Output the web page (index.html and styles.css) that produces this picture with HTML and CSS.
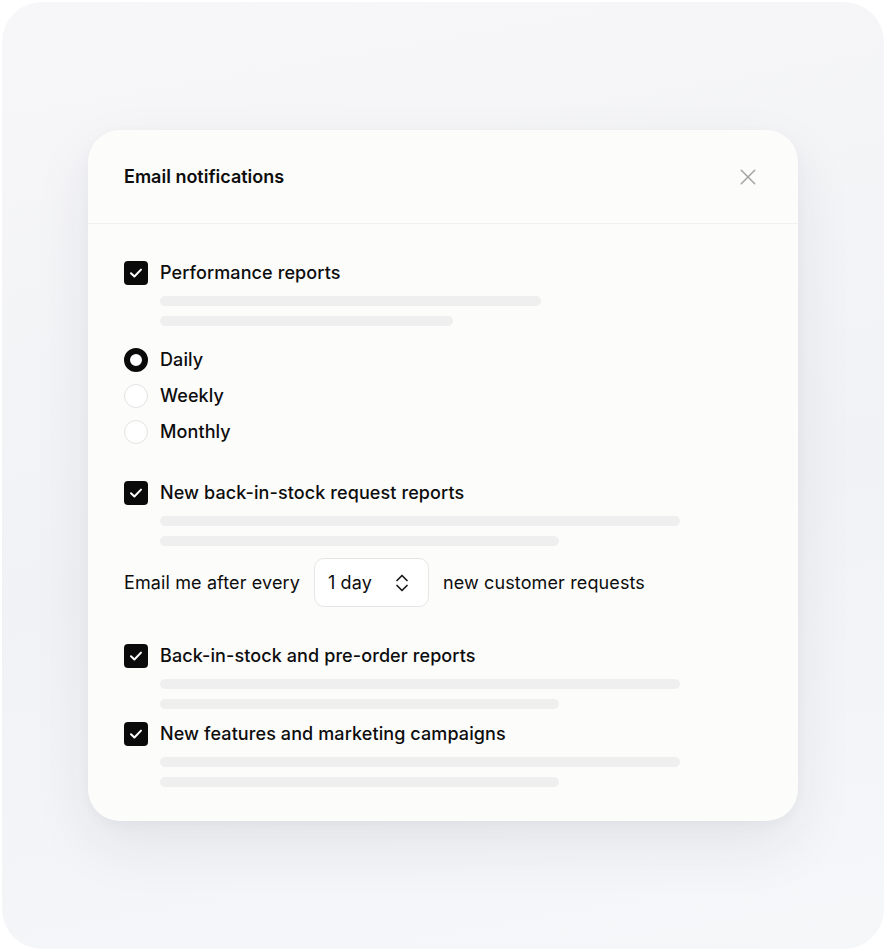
FILE: index.html
```html
<!DOCTYPE html>
<html lang="en">
<head>
    <meta charset="UTF-8">
    <meta name="viewport" content="width=device-width, initial-scale=1.0">
    <title>Email notifications</title>
    <link rel="stylesheet" href="styles.css">
</head>
<body>
    <div class="frame">
        <div class="card">
            <div class="card-header">
                <h1>Email notifications</h1>
                <button class="close" type="button" aria-label="Close">
                    <svg width="20" height="20" viewBox="0 0 20 20" fill="none" stroke="currentColor" stroke-width="1.5" stroke-linecap="round">
                        <path d="M3.3 3.3 L16.7 16.7 M16.7 3.3 L3.3 16.7"/>
                    </svg>
                </button>
            </div>

            <div class="card-body">
                <div class="option">
                    <label class="check-row">
                        <span class="checkbox">
                            <svg width="24" height="24" viewBox="0 0 24 24" fill="none" stroke="#fff" stroke-width="2" stroke-linecap="round" stroke-linejoin="round"><path d="M7 12.2 L10.4 15.5 L17 8.6"/></svg>
                        </span>
                        Performance reports
                    </label>
                    <div class="lines">
                        <span class="line" style="width: 381px"></span>
                        <span class="line" style="width: 293px"></span>
                    </div>
                </div>

                <div class="radios">
                    <label class="radio-row"><span class="radio selected"></span>Daily</label>
                    <label class="radio-row"><span class="radio"></span>Weekly</label>
                    <label class="radio-row"><span class="radio"></span>Monthly</label>
                </div>

                <div class="option spaced">
                    <label class="check-row">
                        <span class="checkbox">
                            <svg width="24" height="24" viewBox="0 0 24 24" fill="none" stroke="#fff" stroke-width="2" stroke-linecap="round" stroke-linejoin="round"><path d="M7 12.2 L10.4 15.5 L17 8.6"/></svg>
                        </span>
                        New back-in-stock request reports
                    </label>
                    <div class="lines">
                        <span class="line" style="width: 520px"></span>
                        <span class="line" style="width: 399px"></span>
                    </div>
                </div>

                <div class="every">
                    <span>Email me after every</span>
                    <div class="select">
                        <span>1 day</span>
                        <svg width="24" height="24" viewBox="0 0 24 24" fill="none" stroke="currentColor" stroke-width="1.7" stroke-linecap="round" stroke-linejoin="round"><path d="M7 9.5 L12 4.5 L17 9.5 M7 14.5 L12 19.5 L17 14.5"/></svg>
                    </div>
                    <span>new customer requests</span>
                </div>

                <div class="option spaced">
                    <label class="check-row">
                        <span class="checkbox">
                            <svg width="24" height="24" viewBox="0 0 24 24" fill="none" stroke="#fff" stroke-width="2" stroke-linecap="round" stroke-linejoin="round"><path d="M7 12.2 L10.4 15.5 L17 8.6"/></svg>
                        </span>
                        Back-in-stock and pre-order reports
                    </label>
                    <div class="lines">
                        <span class="line" style="width: 520px"></span>
                        <span class="line" style="width: 399px"></span>
                    </div>
                </div>

                <div class="option">
                    <label class="check-row">
                        <span class="checkbox">
                            <svg width="24" height="24" viewBox="0 0 24 24" fill="none" stroke="#fff" stroke-width="2" stroke-linecap="round" stroke-linejoin="round"><path d="M7 12.2 L10.4 15.5 L17 8.6"/></svg>
                        </span>
                        New features and marketing campaigns
                    </label>
                    <div class="lines">
                        <span class="line" style="width: 520px"></span>
                        <span class="line" style="width: 399px"></span>
                    </div>
                </div>
            </div>
        </div>
    </div>
</body>
</html>
```

FILE: styles.css
```css
* {
    box-sizing: border-box;
}

body {
    font-family: 'Inter', 'Noto Sans', sans-serif;
    background-color: #fff;
    margin: 0;
    padding: 2px;
    color: #0d0d0d;
}

.frame {
    height: 947px;
    border-radius: 40px;
    background: linear-gradient(170deg, #f7f7f9 0%, #f1f2f5 55%, #f6f7f9 100%);
    padding: 128px 0 0 86px;
}

.card {
    width: 710px;
    background-color: #fcfcfb;
    border-radius: 32px;
    box-shadow: 0 24px 60px rgba(30, 35, 60, 0.08), 0 4px 14px rgba(30, 35, 60, 0.03);
}

.card-header {
    height: 94px;
    display: flex;
    align-items: center;
    justify-content: space-between;
    padding: 0 36px;
    border-bottom: 1px solid #f1f1f3;
}

h1 {
    margin: 0;
    font-size: 18px;
    font-weight: 600;
}

.close {
    border: none;
    background: none;
    padding: 0;
    margin-right: 4px;
    color: #a3a3a3;
    display: flex;
    cursor: pointer;
}

.card-body {
    padding: 37px 36px 34px;
}

.check-row,
.radio-row {
    display: flex;
    align-items: center;
    gap: 12px;
    font-size: 18px;
    font-weight: 500;
    line-height: 24px;
    letter-spacing: 0.1px;
}

.checkbox {
    width: 24px;
    height: 24px;
    border-radius: 4px;
    background-color: #0a0a0a;
    display: flex;
}

.lines {
    display: flex;
    flex-direction: column;
    gap: 10px;
    padding: 11px 0 0 36px;
}

.line {
    display: block;
    height: 10px;
    border-radius: 5px;
    background-color: #efefef;
}

.option + .option {
    margin-top: 13px;
}

.option.spaced {
    margin-top: 37px;
}

.radios {
    display: flex;
    flex-direction: column;
    gap: 12px;
    margin-top: 22px;
}

.radio {
    width: 24px;
    height: 24px;
    border-radius: 50%;
    border: 1.5px solid #e3e3e3;
    background-color: #fff;
}

.radio.selected {
    border: 6px solid #0a0a0a;
}

.every {
    display: flex;
    align-items: center;
    gap: 14px;
    margin-top: 12px;
    font-size: 18px;
    letter-spacing: 0.12px;
}

.select {
    width: 115px;
    height: 49px;
    border: 1px solid #e6e6e6;
    border-radius: 10px;
    background-color: #fff;
    display: flex;
    align-items: center;
    justify-content: space-between;
    padding: 0 14px 0 13px;
}

.select svg {
    color: #1a1a1a;
}
```
